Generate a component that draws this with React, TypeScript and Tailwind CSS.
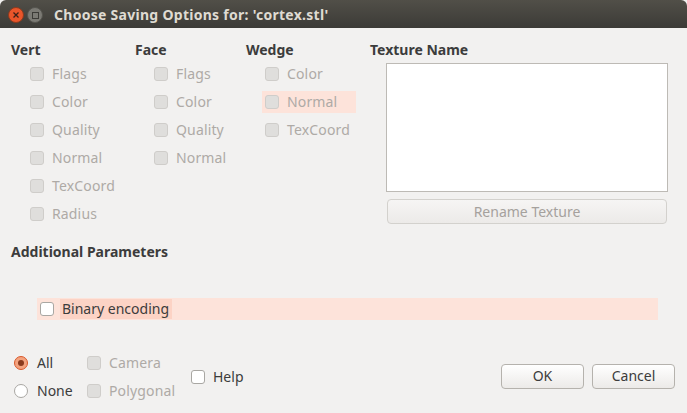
import React from 'react';

function Check({ label, disabled = true, hl = false }: { label: string; disabled?: boolean; hl?: boolean }) {
  return (
    <div className={`flex items-center h-[22px] mb-[6px] gap-[8px] ${hl ? 'bg-[#fde3da] w-[94px] ml-[1px] pl-[3px]' : 'pl-[4px]'}`}>
      <span className={`w-[14px] h-[14px] rounded-[3px] border shrink-0 ${disabled ? 'bg-[#dfdedc] border-[#cfcdca]' : 'bg-white border-[#a9a7a3]'}`} />
      <span className={`tracking-[0.15px] ${disabled ? 'text-[#aeaaa6]' : 'text-[#3c3c3c]'}`}>{label}</span>
    </div>
  );
}

function Column({ title, items, width, hl }: { title: string; items: string[]; width: string; hl?: string }) {
  return (
    <div className={`${width} shrink-0`}>
      <div className="font-bold text-[#3c3c3c] h-[20px] leading-[20px] mb-[3px]">{title}</div>
      <div className="pl-[15px]">
        {items.map((item) => (
          <Check key={item} label={item} hl={item === hl} />
        ))}
      </div>
    </div>
  );
}

function Radio({ label, checked = false }: { label: string; checked?: boolean }) {
  return (
    <div className="flex items-center h-[22px] gap-[9px]">
      <span className={`w-[14px] h-[14px] rounded-full border flex items-center justify-center ${checked ? 'bg-[#f3a37f] border-[#d9582a]' : 'bg-white border-[#a9a7a3]'}`}>
        {checked && <span className="w-[6px] h-[6px] rounded-full bg-[#8a3a1c]" />}
      </span>
      <span className="text-[#3c3c3c]">{label}</span>
    </div>
  );
}

function Btn({ label }: { label: string }) {
  return (
    <button className="w-[83px] h-[25px] rounded-[4px] border border-[#b5b2ad] bg-gradient-to-b from-white to-[#eceae8] text-[#3c3c3c]">
      {label}
    </button>
  );
}

export default function App() {
  return (
    <div className="w-[687px] h-[413px] bg-[#f2f1f0] flex flex-col overflow-hidden text-[14px] leading-[20px] font-['Noto_Sans',sans-serif]">
      <div className="h-[28px] shrink-0 flex items-center pl-[8px] pt-[2px] bg-gradient-to-b from-[#514f48] to-[#3c3b37] rounded-t-[6px]">
        <span className="w-[16px] h-[16px] rounded-full bg-[#e9552a] border border-[#8c3a1e] flex items-center justify-center">
          <svg width="8" height="8" viewBox="0 0 8 8">
            <path d="M1.5 1.5 L6.5 6.5 M6.5 1.5 L1.5 6.5" stroke="#3a2018" strokeWidth="1.3" />
          </svg>
        </span>
        <span className="w-[16px] h-[16px] rounded-full bg-[#7b7a74] border border-[#55544e] flex items-center justify-center ml-[3px]">
          <span className="w-[7px] h-[7px] border border-[#3c3b37]" />
        </span>
        <span className="ml-[11px] font-bold text-[#dfdbd2] tracking-[0.28px]">Choose Saving Options for: 'cortex.stl'</span>
      </div>

      <div className="flex pl-[11px] pt-[12px] h-[208px] shrink-0">
        <Column title="Vert" width="w-[124px]" items={['Flags', 'Color', 'Quality', 'Normal', 'TexCoord', 'Radius']} />
        <Column title="Face" width="w-[111px]" items={['Flags', 'Color', 'Quality', 'Normal']} />
        <Column title="Wedge" width="w-[124px]" items={['Color', 'Normal', 'TexCoord']} hl="Normal" />
        <div className="flex flex-col">
          <div className="font-bold text-[#3c3c3c] h-[20px] leading-[20px] mb-[3px]">Texture Name</div>
          <div className="ml-[16px] w-[282px] h-[129px] bg-white border border-[#bdbab5]" />
          <button className="ml-[17px] mt-[7px] w-[280px] h-[25px] rounded-[4px] border border-[#d3d1cd] bg-gradient-to-b from-[#f6f5f4] to-[#eceae8] text-[#a5a19d]">
            Rename Texture
          </button>
        </div>
      </div>

      <div className="pl-[11px] mt-[6px] h-[20px] font-bold text-[#3c3c3c]">Additional Parameters</div>

      <div className="ml-[37px] mt-[36px] w-[621px] h-[22px] bg-[#fde3da] flex items-center pl-[3px] gap-[6px]">
        <span className="w-[14px] h-[14px] rounded-[3px] bg-white border border-[#a9a7a3]" />
        <span className="h-[20px] bg-[#fcd3c5] px-[2px] w-[112px] text-[#3c3c3c]">Binary encoding</span>
      </div>

      <div className="flex items-center pl-[14px] pr-[12px] mt-[32px]">
        <div className="flex flex-col gap-[6px] w-[69px]">
          <Radio label="All" checked />
          <Radio label="None" />
        </div>
        <div className="flex flex-col w-[108px] -mb-[6px]">
          <Check label="Camera" disabled />
          <Check label="Polygonal" disabled />
        </div>
        <div className="flex items-center gap-[8px]">
          <span className="w-[14px] h-[14px] rounded-[3px] bg-white border border-[#a9a7a3]" />
          <span className="text-[#3c3c3c]">Help</span>
        </div>
        <div className="ml-auto flex gap-[8px] -mt-[2px]">
          <Btn label="OK" />
          <Btn label="Cancel" />
        </div>
      </div>
    </div>
  );
}
